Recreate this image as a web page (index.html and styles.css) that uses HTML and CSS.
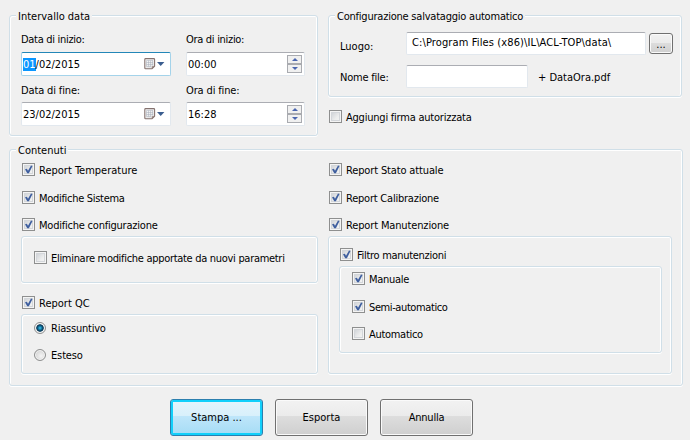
FILE: index.html
```html
<!DOCTYPE html>
<html lang="it">
<head>
<meta charset="utf-8">
<title>Stampa report</title>
<link rel="stylesheet" href="styles.css">
</head>
<body>
<svg class="defs" width="0" height="0" aria-hidden="true">
  <linearGradient id="calfill" x1="0" y1="0" x2="1" y2="1"><stop offset="0" stop-color="#fff"/><stop offset="1" stop-color="#dcdcdc"/></linearGradient>
  <symbol id="tick" viewBox="0 0 13 13"><path d="M3 6.3 4.9 5.8l1.1 2L9 2.5l1.5.6-3.6 7.2H5.2z" fill="#3f5f9f"/></symbol>
  <symbol id="calendar" viewBox="0 0 21 12">
    <path d="M1.6.6h8.2q.8 0 .8.8v6.8l-2.6 2.6H1.6q-.8 0-.8-.8V1.4q0-.8.8-.8z" fill="url(#calfill)" stroke="#84726f" stroke-width="1.1"/>
    <path d="M7.8 11V8.2h2.8z" fill="#917f7c"/>
    <path d="M2.5 2.5h6.5M2.5 4.5h6.5M2.5 6.5h6.5M2.5 8.5h4.5M2.5 2.5v6M4.5 2.5v6M6.5 2.5v6M8.5 2.5v5" fill="none" stroke="#a5adba" stroke-width=".5"/>
    <path d="M13 4h7.4l-3.7 4z" fill="#3a5d8f"/>
  </symbol>
</svg>
<main class="dialog">
  <div class="top">
    <section class="group interval">
      <h2 class="legend">Intervallo data</h2>
      <div class="times">
        <div class="stack">
          <label class="t3">Data di inizio:</label>
          <div class="field date focus"><span><mark>01</mark>/02/2015</span><svg class="cal"><use href="#calendar"/></svg></div>
          <label class="t1">Data di fine:</label>
          <div class="field date"><span>23/02/2015</span><svg class="cal"><use href="#calendar"/></svg></div>
        </div>
        <div class="stack">
          <label class="t3">Ora di inizio:</label>
          <div class="field time"><span>00:00</span><div class="spin"><i class="up"></i><i class="down"></i></div></div>
          <label class="t1">Ora di fine:</label>
          <div class="field time"><span>16:28</span><div class="spin"><i class="up"></i><i class="down"></i></div></div>
        </div>
      </div>
    </section>
    <div class="side">
      <section class="group saving">
        <h2 class="legend t2">Configurazione salvataggio automatico</h2>
        <div class="row path"><label>Luogo:</label><div class="field w1">C:\Program Files (x86)\IL\ACL-TOP\data\</div><button class="browse">...</button></div>
        <div class="row name"><label class="t2">Nome file:</label><div class="field"></div><span class="suffix">+ DataOra.pdf</span></div>
      </section>
      <div class="check sign"><i class="box"></i><span class="t2">Aggiungi firma autorizzata</span></div>
    </div>
  </div>
  <section class="group contents">
    <h2 class="legend">Contenuti</h2>
    <div class="columns">
      <div class="col">
        <div class="check"><i class="box"><svg><use href="#tick"/></svg></i><span>Report Temperature</span></div>
        <div class="check second"><i class="box"><svg><use href="#tick"/></svg></i><span class="t3">Modifiche Sistema</span></div>
        <div class="check third"><i class="box"><svg><use href="#tick"/></svg></i><span class="t2">Modifiche configurazione</span></div>
        <div class="group remove"><div class="check"><i class="box"></i><span class="t3">Eliminare modifiche apportate da nuovi parametri</span></div></div>
        <div class="check qc"><i class="box"><svg><use href="#tick"/></svg></i><span>Report QC</span></div>
        <div class="group modes">
          <div class="check"><i class="radio on"></i><span class="t2">Riassuntivo</span></div>
          <div class="check"><i class="radio"></i><span class="t1">Esteso</span></div>
        </div>
      </div>
      <div class="col">
        <div class="check"><i class="box"><svg><use href="#tick"/></svg></i><span class="t1">Report Stato attuale</span></div>
        <div class="check second"><i class="box"><svg><use href="#tick"/></svg></i><span class="t2">Report Calibrazione</span></div>
        <div class="check third"><i class="box"><svg><use href="#tick"/></svg></i><span class="t1">Report Manutenzione</span></div>
        <div class="group maint">
          <div class="check"><i class="box"><svg><use href="#tick"/></svg></i><span class="t3">Filtro manutenzioni</span></div>
          <div class="group kinds">
            <div class="check"><i class="box"><svg><use href="#tick"/></svg></i><span class="t3">Manuale</span></div>
            <div class="check second"><i class="box"><svg><use href="#tick"/></svg></i><span class="t4">Semi-automatico</span></div>
            <div class="check third"><i class="box"></i><span class="t3">Automatico</span></div>
          </div>
        </div>
      </div>
    </div>
  </section>
  <footer class="actions">
    <button class="primary">Stampa ...</button>
    <button>Esporta</button>
    <button class="t2">Annulla</button>
  </footer>
</main>
</body>
</html>
```
FILE: styles.css
```css
* { box-sizing: border-box; }
body {
  margin: 0;
  width: 690px;
  height: 440px;
  overflow: hidden;
  background: #f0f0f0;
  color: #000;
  font: 11px/16px "DejaVu Sans Condensed", "DejaVu Sans", sans-serif;
  font-stretch: condensed;
  white-space: nowrap;
}
.defs { position: absolute; }
.dialog { padding: 15px 0 0 9px; }
.top { display: flex; gap: 10px; height: 134px; }
.group {
  border: 1px solid #d0dfe8;
  border-radius: 3px;
  box-shadow: inset 1px 1px 0 #fff, inset -1px 0 0 #fff, 0 1px 0 #fff;
}
.legend {
  width: fit-content;
  height: 14px;
  margin: -7px 0 0 6px;
  padding: 0 2px;
  background: #f0f0f0;
  font: inherit;
}
.interval { width: 309px; height: 121px; }
.times { display: flex; gap: 15px; padding: 9px 0 0 11px; }
.stack label { display: block; height: 20px; }
.stack .field + label { height: 19px; margin-top: 7px; }
.field {
  display: flex;
  border: 1px solid #e2e8ee;
  border-top-color: #abadb3;
  border-radius: 2px;
  background: #fff;
}
.date { width: 150px; height: 24px; padding: 4px 0 0 1px; }
.focus { border-color: #a4d3ea; border-top-color: #2387b8; }
.date span { flex: 1; }
.date mark { background: #0a96ff; color: #fff; }
.cal { width: 21px; height: 12px; margin: 1px 5px 0 0; }
.time { width: 119px; height: 24px; padding: 4px 2px 0 1px; justify-content: space-between; }
.spin { width: 15px; height: 18px; margin-top: -2px; }
.spin i {
  display: flex;
  align-items: center;
  justify-content: center;
  height: 9px;
  border: 1px solid #a9abb0;
  background: #f0f0f0;
}
.spin i::before { content: ""; border: 3px solid transparent; }
.spin .up::before { border-top: 0; border-bottom-color: #4a66b0; }
.spin .down::before { border-bottom: 0; border-top-color: #4a66b0; }

.saving { width: 354px; height: 82px; }
.row { display: flex; padding-left: 11px; }
.row label { width: 66px; }
.path { margin-top: 9px; height: 33px; }
.path label { padding-top: 7px; }
.path .field { width: 240px; height: 23px; padding: 2px 0 0 5px; }
.name .field { width: 122px; height: 23px; }
.name label { padding-top: 5px; }
.suffix { padding: 5px 0 0 10px; }
.sign { margin-top: 13px; padding-left: 1px; }

.check { display: flex; gap: 4px; height: 14px; }
.box {
  flex: none;
  width: 13px;
  height: 13px;
  border: 1px solid #8e8f8f;
  background: linear-gradient(135deg, #c6cad0, #eceded 60%, #f6f6f6);
  box-shadow: inset 0 0 0 1px #f4f4f4, inset 0 0 0 2px #d3d6da;
}
.box svg { display: block; width: 13px; height: 13px; margin: -1px; overflow: visible; }
.contents { width: 674px; height: 237px; }
.columns { display: flex; gap: 10px; padding: 6px 0 0 11px; }
.col { width: 297px; }
.col + .col { width: 344px; }
.col > .check { padding-left: 1px; }
.second { margin-top: 14px; }
.third { margin-top: 13px; }
.remove { height: 47px; margin-top: 4px; padding: 14px 0 0 12px; }
.qc { margin-top: 13px; }
.modes { height: 60px; margin-top: 4px; padding: 6px 0 0 12px; }
.modes .check + .check { margin-top: 13px; }
.radio {
  width: 12px;
  height: 12px;
  margin: 1px 1px 0 0;
  border: 1px solid #8e8f8f;
  border-radius: 50%;
  background: radial-gradient(circle at 60% 60%, #f4f4f4, #c8c8c8);
  box-shadow: inset 0 0 0 1px #f4f4f4;
}
.radio.on { background: radial-gradient(circle, #4cc8ee 0, #1587b5 1.4px, #0b3d5c 3px, #0b3d5c 3.4px, #eee 4.2px); }
.maint { height: 138px; margin-top: 4px; padding: 11px 0 0 10px; }
.maint > .check { padding-left: 1px; }
.kinds { width: 323px; height: 87px; margin-top: 4px; padding: 5px 0 0 12px; }

.actions { display: flex; gap: 12px; padding: 13px 0 0 161px; }
button {
  padding: 1px 0 0;
  border: 1px solid #707070;
  border-radius: 3px;
  background: linear-gradient(#f2f2f2, #ebebeb 46%, #dddddd 47%, #cfcfcf);
  box-shadow: inset 0 0 0 1px #fafafa;
  color: #000;
  font: inherit;
}
.actions button { width: 93px; height: 37px; }
.actions .primary {
  border-color: #2c7fae;
  background: linear-gradient(#e5f5fc, #d8f0fb 46%, #bee6fa 47%, #a5dcf5);
  box-shadow: inset 0 0 0 2px #12d0fb;
}
.browse { width: 24px; height: 21px; margin: 1px 0 0 3px; padding-top: 3px; }

/* Tracking steps: t1-t4 tighten, w1 widens */
.t1 { letter-spacing: -.14px; }
.t2 { letter-spacing: -.22px; }
.t3 { letter-spacing: -.3px; }
.t4 { letter-spacing: -.4px; }
.w1 { letter-spacing: .12px; }
```
